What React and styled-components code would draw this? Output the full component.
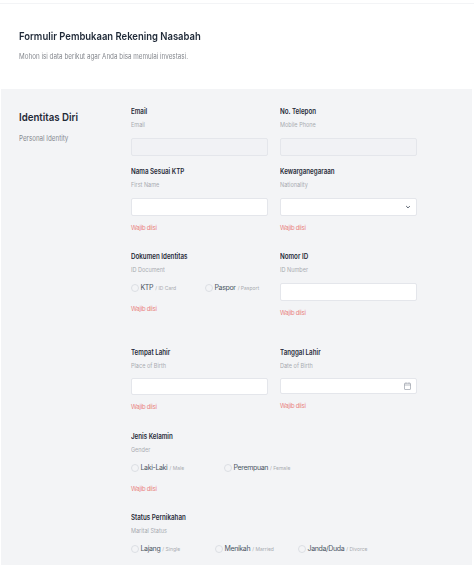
import React from "react";
import styled, { createGlobalStyle, css } from "styled-components";

const GlobalStyle = createGlobalStyle`
  html, body {
    margin: 0;
    padding: 0;
    background: #fff;
    font-family: "Inter", "Liberation Sans", sans-serif;
  }
`;

// the reference is drawn narrower than the font's natural width
const squeezed = (ratio) => css`
  transform: scaleX(${ratio});
  transform-origin: left center;
`;

const Page = styled.div`
  width: 474px;
  height: 566px;
  overflow: hidden;
  box-sizing: border-box;
  padding-top: 3px;
  filter: blur(0.35px);
`;

const TopLine = styled.div`
  height: 1px;
  background: #f3f4f6;
`;

const Header = styled.header`
  height: 85px;
  box-sizing: border-box;
  padding: 24px 19px 0;
`;

const Title = styled.h1`
  margin: 0;
  font-size: 11px;
  line-height: 16px;
  font-weight: 600;
  color: #1f2937;
  ${squeezed(0.86)}
`;

const Subtitle = styled.p`
  margin: 7px 0 0;
  font-size: 7.5px;
  line-height: 12px;
  color: #85888e;
  ${squeezed(0.84)}
`;

const Panel = styled.section`
  display: grid;
  grid-template-columns: 130px 286px;
  margin: 0 2px 0 1px;
  height: 476px;
  box-sizing: border-box;
  padding-top: 18px;
  background: #f3f4f6;
`;

const Side = styled.div`
  padding: 2px 0 0 18px;
`;

const SideTitle = styled.h2`
  margin: 0;
  font-size: 11px;
  line-height: 16px;
  font-weight: 600;
  color: #1f2937;
  ${squeezed(0.88)}
`;

const SideText = styled.p`
  margin: 8px 0 0;
  font-size: 7.5px;
  line-height: 12px;
  color: #85888e;
  ${squeezed(0.83)}
`;

const Row = styled.div`
  display: grid;
  grid-template-columns: 137px 137px;
  column-gap: 12px;
  margin-bottom: ${(props) => props.$after || 0}px;
`;

const WideRow = styled.div`
  margin-bottom: ${(props) => props.$after || 0}px;
`;

const Label = styled.div`
  font-size: 7.5px;
  line-height: 10px;
  font-weight: 600;
  color: #1f2937;
  ${squeezed(0.83)}
`;

const Hint = styled.div`
  margin-top: 3px;
  font-size: 6.5px;
  line-height: 10px;
  color: #a8abb0;
  ${squeezed(0.85)}
`;

const Control = styled.div`
  position: relative;
  height: ${(props) => props.$height || 18}px;
  margin-top: ${(props) => props.$top || 8}px;
  box-sizing: border-box;
  border: 1px solid #e4e6eb;
  border-radius: 2px;
  background: ${(props) => (props.$disabled ? "#f1f2f5" : "#fff")};
`;

const ControlIcon = styled.svg`
  position: absolute;
  top: 50%;
  right: 5px;
  transform: translateY(-50%);
  display: block;
`;

const ErrorText = styled.div`
  margin-top: 7px;
  font-size: 6px;
  line-height: 10px;
  letter-spacing: -0.25px;
  color: #e98080;
`;

const RadioGroup = styled.div`
  display: flex;
  align-items: center;
  height: 10px;
  margin-top: 8px;
  padding-bottom: 4px;
`;

const RadioOption = styled.div`
  display: flex;
  align-items: center;
  flex: 0 0 ${(props) => props.$width}px;
`;

const RadioDot = styled.span`
  width: 8px;
  height: 8px;
  flex: none;
  box-sizing: border-box;
  border: 1px solid #dcdfe4;
  border-radius: 50%;
  background: #f3f4f6;
  margin-right: 1.5px;
`;

const RadioName = styled.span`
  font-size: 7px;
  line-height: 10px;
  letter-spacing: -0.35px;
  color: #4b5563;
  white-space: nowrap;
`;

const RadioNote = styled.span`
  font-size: 5px;
  line-height: 10px;
  color: #a8abb0;
  margin-left: 2px;
  white-space: nowrap;
`;

const Chevron = () => (
  <ControlIcon width="6" height="6" viewBox="0 0 10 10" fill="none">
    <path d="M2 3.5 5 6.5 8 3.5" stroke="#4b5563" strokeWidth="1.6" />
  </ControlIcon>
);

const CalendarIcon = () => (
  <ControlIcon width="7" height="8" viewBox="0 0 14 16" fill="none">
    <rect x="1" y="2.5" width="12" height="12.5" rx="1" stroke="#8a919c" strokeWidth="1.2" />
    <path d="M1 6h12M4 1v2M10 1v2" stroke="#8a919c" strokeWidth="1.2" />
  </ControlIcon>
);

const Radios = ({ options }) => (
  <RadioGroup>
    {options.map((option) => (
      <RadioOption key={option.name} $width={option.width}>
        <RadioDot />
        <RadioName>{option.name}</RadioName>
        <RadioNote>/ {option.note}</RadioNote>
      </RadioOption>
    ))}
  </RadioGroup>
);

const Field = ({ label, hint, error, children }) => (
  <div>
    <Label>{label}</Label>
    <Hint>{hint}</Hint>
    {children}
    {error && <ErrorText>Wajib diisi</ErrorText>}
  </div>
);

const App = () => (
  <Page>
    <GlobalStyle />
    <TopLine />
    <Header>
      <Title>Formulir Pembukaan Rekening Nasabah</Title>
      <Subtitle>Mohon isi data berikut agar Anda bisa memulai investasi.</Subtitle>
    </Header>
    <Panel>
      <Side>
        <SideTitle>Identitas Diri</SideTitle>
        <SideText>Personal Identity</SideText>
      </Side>
      <div>
        <Row $after={11}>
          <Field label="Email" hint="Email">
            <Control $disabled />
          </Field>
          <Field label="No. Telepon" hint="Mobile Phone">
            <Control $disabled />
          </Field>
        </Row>
        <Row $after={19}>
          <Field label="Nama Sesuai KTP" hint="First Name" error>
            <Control />
          </Field>
          <Field label="Kewarganegaraan" hint="Nationality" error>
            <Control>
              <Chevron />
            </Control>
          </Field>
        </Row>
        <Row $after={30}>
          <Field label="Dokumen Identitas" hint="ID Document" error>
            <Radios
              options={[
                { name: "KTP", note: "ID Card", width: 74 },
                { name: "Paspor", note: "Pasport", width: 63 }
              ]}
            />
          </Field>
          <Field label="Nomor ID" hint="ID Number" error>
            <Control />
          </Field>
        </Row>
        <Row $after={20}>
          <Field label="Tempat Lahir" hint="Place of Birth" error>
            <Control $top={7} $height={17} />
          </Field>
          <Field label="Tanggal Lahir" hint="Date of Birth" error>
            <Control $top={7} $height={16}>
              <CalendarIcon />
            </Control>
          </Field>
        </Row>
        <WideRow $after={19}>
          <Field label="Jenis Kelamin" hint="Gender" error>
            <Radios
              options={[
                { name: "Laki-Laki", note: "Male", width: 93 },
                { name: "Perempuan", note: "Female", width: 90 }
              ]}
            />
          </Field>
        </WideRow>
        <WideRow>
          <Field label="Status Pernikahan" hint="Marital Status">
            <Radios
              options={[
                { name: "Lajang", note: "Single", width: 84 },
                { name: "Menikah", note: "Married", width: 83 },
                { name: "Janda/Duda", note: "Divorce", width: 90 }
              ]}
            />
          </Field>
        </WideRow>
      </div>
    </Panel>
  </Page>
);

export default App;
